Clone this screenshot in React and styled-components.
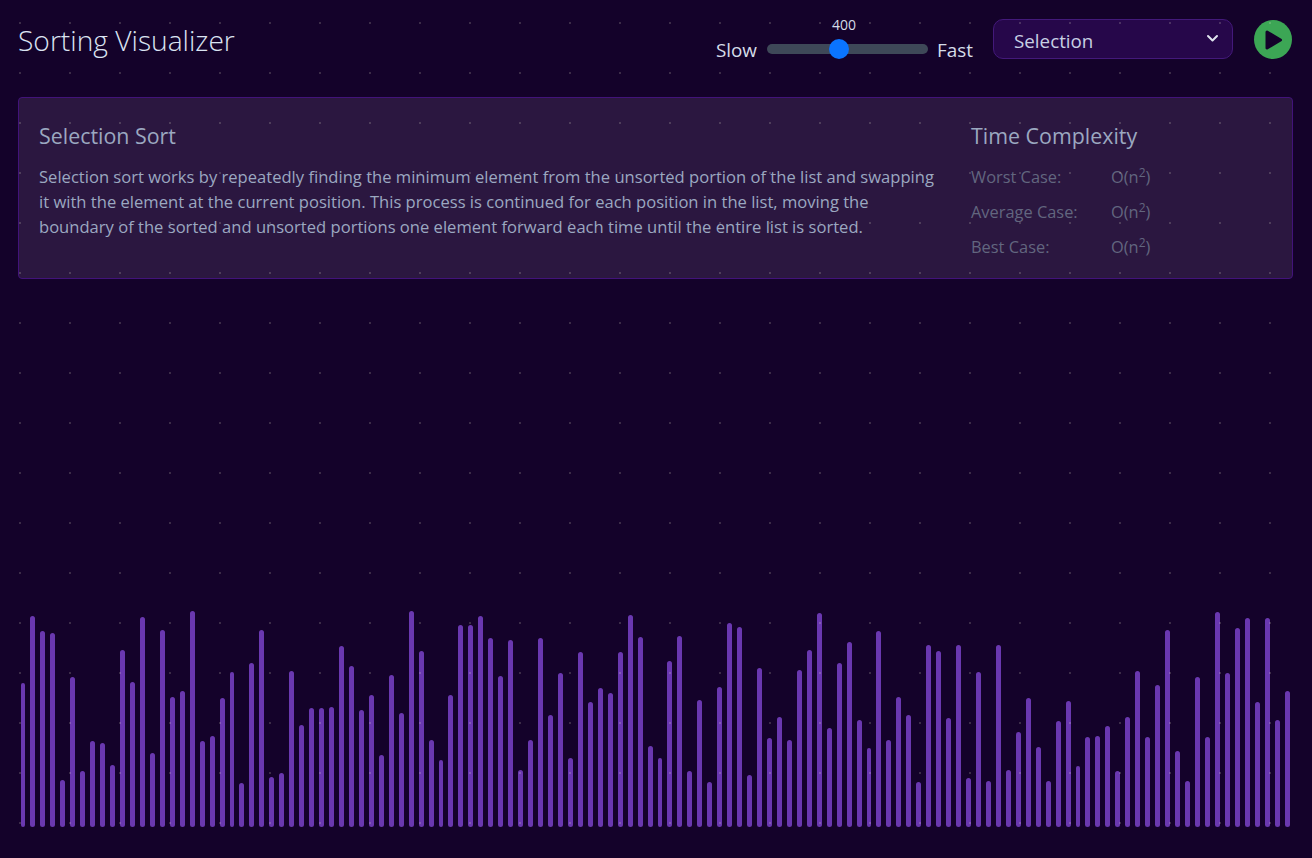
import React from 'react'
import styled, { createGlobalStyle } from 'styled-components'

// tops of the bars, read off the screenshot (bars all end at y=827)
const tops = [
  683,616,631,633,780,677,771,741,743,765,650,682,617,753,630,697,691,611,741,736,698,672,783,663,630,777,773,671,725,708,708,707,
  646,666,710,695,755,675,713,611,651,740,760,695,625,625,616,638,676,640,770,740,638,715,673,758,652,702,688,693,652,615,637,746,758,
  661,636,771,700,782,687,623,627,775,668,738,717,740,670,650,613,728,663,642,720,748,631,740,697,715,782,645,651,718,645,778,672,781,
  645,770,732,698,747,781,721,701,766,737,736,726,771,717,671,737,685,630,751,781,677,737,612,673,628,618,702,618,720,691,
]

const cases = ['Worst Case:', 'Average Case:', 'Best Case:']

const GlobalStyle = createGlobalStyle`
  html, body {
    margin: 0;
    padding: 0;
    background: #14022a;
  }
  body {
    font-family: "Open Sans", "Noto Sans", sans-serif;
  }
`

const Page = styled.div`
  height: 858px;
  padding: 0 19px 0 18px;
  box-sizing: border-box;
  display: flex;
  flex-direction: column;
  overflow: hidden;
`

const Dots = styled.div`
  position: fixed;
  inset: 0;
  pointer-events: none;
  background-image: radial-gradient(circle at 1px 1px, rgba(255, 255, 220, 0.17) 1px, transparent 1.2px);
  background-size: 50px 50px;
  background-position: 19px 22px;
`

const Header = styled.header`
  height: 97px;
  display: flex;
  align-items: flex-start;
  justify-content: space-between;
  flex-shrink: 0;
`

const Title = styled.h1`
  margin: 20px 0 0;
  font-size: 28.2px;
  line-height: 41px;
  font-weight: 300;
  color: #dbe4f2;
`

const Controls = styled.div`
  display: flex;
  align-items: flex-start;
  margin-right: 1px;
`

const SpeedLabel = styled.span`
  margin-top: 37px;
  font-size: 18.9px;
  line-height: 26px;
  color: #d5dce8;
`

const SliderWrap = styled.div`
  position: relative;
  width: 161px;
  height: 10px;
  margin: 44px 9px 0 10px;
  border-radius: 5px;
  background: #3e4858;
`

const SliderValue = styled.span`
  position: absolute;
  left: 65px;
  top: -29px;
  font-size: 14px;
  line-height: 20px;
  color: #d5dce8;
`

const SliderThumb = styled.span`
  position: absolute;
  left: 62px;
  top: -5px;
  width: 20px;
  height: 20px;
  border-radius: 50%;
  background: #0a74ff;
`

const Select = styled.div`
  width: 240px;
  height: 40px;
  margin: 19px 0 0 20px;
  padding: 3px 13px 0 20px;
  box-sizing: border-box;
  display: flex;
  align-items: center;
  justify-content: space-between;
  background: #26074a;
  border: 1px solid #43197a;
  border-radius: 10px;
  font-size: 18.8px;
  color: #c8d0e4;
`

const Chevron = styled.svg`
  width: 13px;
  height: 9px;
  margin-top: -5px;
`

const PlayButton = styled.button`
  width: 38px;
  height: 39px;
  margin: 20px 0 0 21px;
  padding: 0;
  border: none;
  border-radius: 50%;
  background: #3ca655;
  display: flex;
  align-items: center;
  justify-content: center;
`

const InfoPanel = styled.section`
  height: 182px;
  padding: 23px 20px 0;
  box-sizing: border-box;
  display: flex;
  flex-shrink: 0;
  justify-content: space-between;
  background: #2b1740;
  border: 1px solid #42137a;
  border-radius: 4px;
`

const Description = styled.div`
  width: 900px;
`

const Heading = styled.h2`
  margin: 0 0 13px;
  font-size: 21.4px;
  line-height: 30px;
  font-weight: 400;
  color: #9ba8c0;
`

const Body = styled.p`
  margin: 0;
  font-size: 16.58px;
  line-height: 25px;
  color: #9ba8c0;
`

const Complexity = styled.div`
  width: 301px;
`

const CaseRow = styled.div`
  display: flex;
  height: 35px;
  font-size: 16.4px;
  line-height: 25px;
  color: #62667f;
`

const CaseName = styled.span`
  width: 140px;
`

const Sup = styled.sup`
  font-size: 12px;
  line-height: 0;
`

const Chart = styled.div`
  display: flex;
  align-items: flex-end;
  gap: 5px;
  height: 217px;
  margin-top: auto;
  margin-bottom: 31px;
  padding-left: 2.5px;
`

const Bar = styled.div`
  flex: none;
  width: 4.955px;
  border-radius: 3px;
  background: #6a38b0;
`

export default function App() {
  return (
    <>
      <GlobalStyle />
      <Page>
        <Header>
          <Title>Sorting Visualizer</Title>
          <Controls>
            <SpeedLabel>Slow</SpeedLabel>
            <SliderWrap>
              <SliderValue>400</SliderValue>
              <SliderThumb />
            </SliderWrap>
            <SpeedLabel>Fast</SpeedLabel>
            <Select>
              Selection
              <Chevron viewBox="0 0 13 9">
                <path d="M2 2 L6.5 6.5 L11 2" fill="none" stroke="#dfe4ee" strokeWidth="2" strokeLinecap="round" strokeLinejoin="round" />
              </Chevron>
            </Select>
            <PlayButton aria-label="Play">
              <svg width="20" height="24" viewBox="0 0 20 24">
                <path d="M4 4 L17.5 12 L4 20 Z" fill="#14022a" stroke="#14022a" strokeWidth="3" strokeLinejoin="round" />
              </svg>
            </PlayButton>
          </Controls>
        </Header>
        <InfoPanel>
          <Description>
            <Heading>Selection Sort</Heading>
            <Body>
              Selection sort works by repeatedly finding the minimum element from the unsorted portion of the list and swapping it with the element at the current position. This process is continued for each position in the list, moving the boundary of the sorted and unsorted portions one element forward each time until the entire list is sorted.
            </Body>
          </Description>
          <Complexity>
            <Heading>Time Complexity</Heading>
            {cases.map((name) => (
              <CaseRow key={name}>
                <CaseName>{name}</CaseName>
                <span>O(n<Sup>2</Sup>)</span>
              </CaseRow>
            ))}
          </Complexity>
        </InfoPanel>
        <Chart>
          {tops.map((top, i) => (
            <Bar key={i} style={{ height: 827 - top }} />
          ))}
        </Chart>
      </Page>
      <Dots />
    </>
  )
}
